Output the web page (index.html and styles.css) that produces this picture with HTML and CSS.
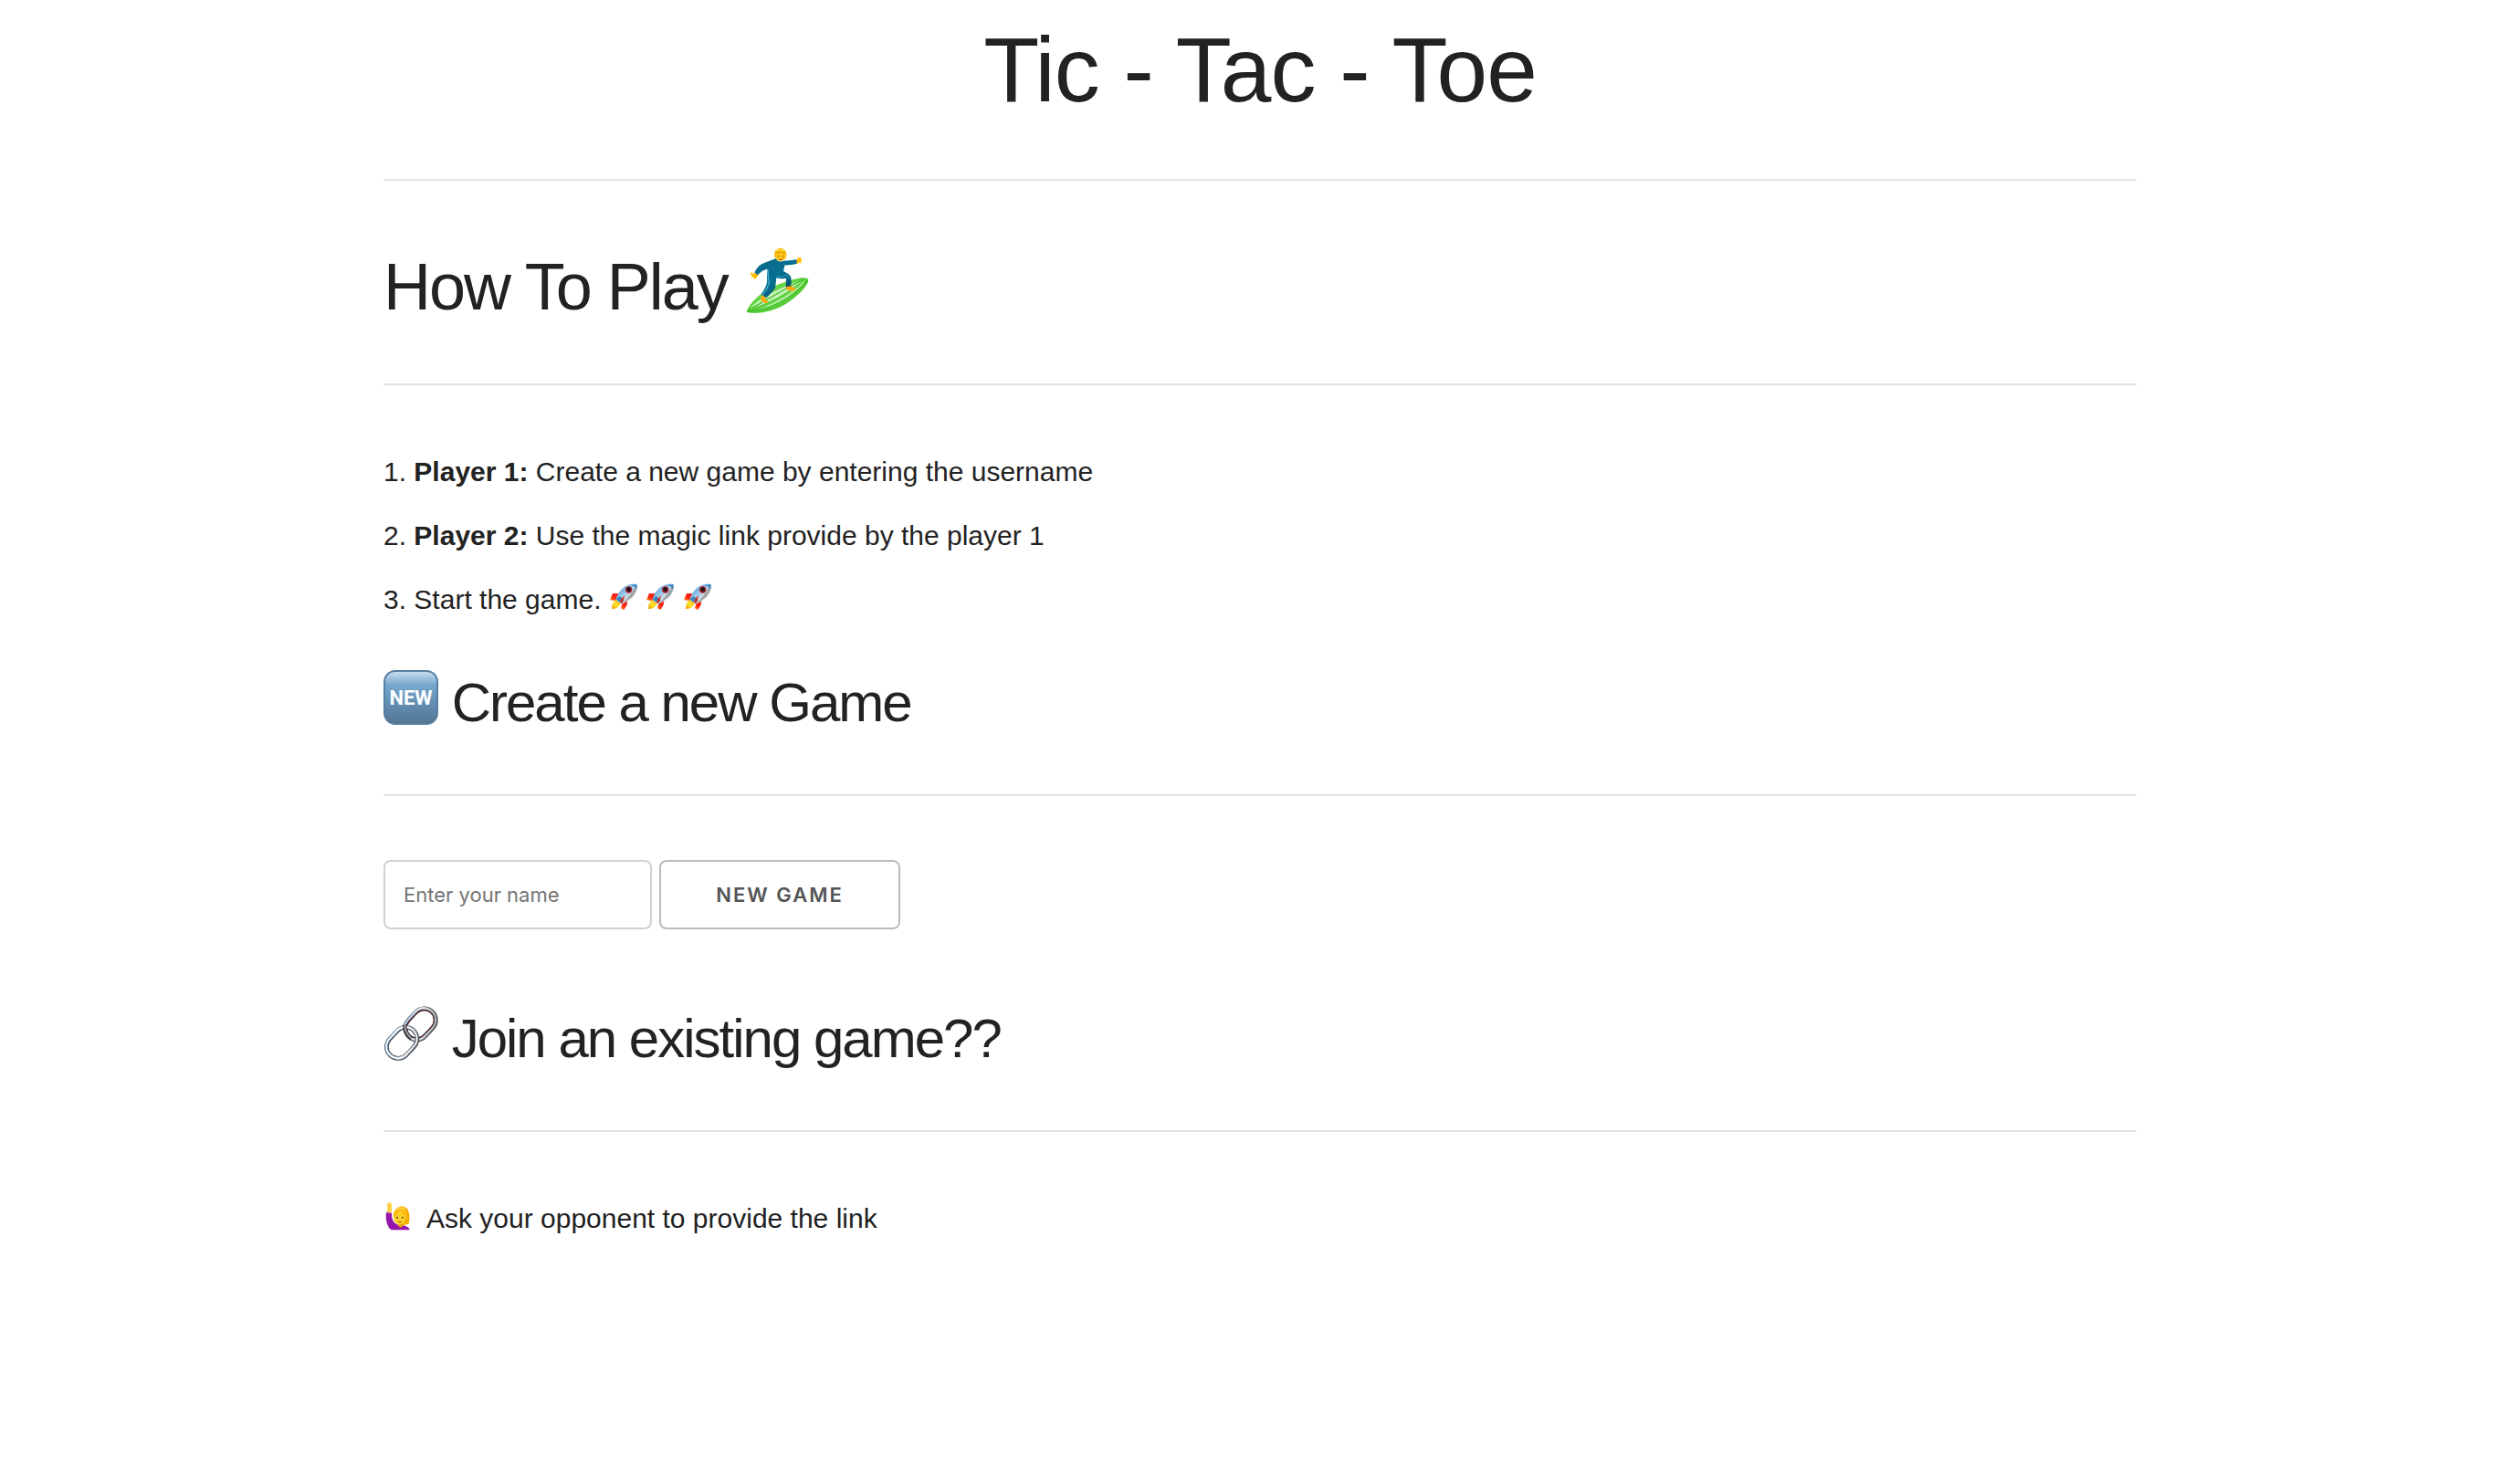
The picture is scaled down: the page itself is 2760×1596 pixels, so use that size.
FILE: index.html
```html
<!DOCTYPE html>
<html lang="en">
<head>
<meta charset="utf-8">
<meta name="viewport" content="width=device-width, initial-scale=1">
<title>Tic - Tac - Toe</title>
<link rel="stylesheet" href="styles.css">
</head>
<body>
<svg class="defs" aria-hidden="true">
  <defs>
    <linearGradient id="hull" x1="0" y1="0" x2="1" y2="1"><stop offset="0" stop-color="#2f7fc4"/><stop offset=".4" stop-color="#8fc4ea"/><stop offset=".65" stop-color="#dfe3e2"/><stop offset="1" stop-color="#5d6468"/></linearGradient>
    <linearGradient id="flame" x1="1" y1="0" x2="0" y2="1"><stop offset="0" stop-color="#ff8a00"/><stop offset=".5" stop-color="#ffe62e"/><stop offset="1" stop-color="#f39a00"/></linearGradient>
    <linearGradient id="fin" x1="1" y1="0" x2="0" y2="1"><stop offset="0" stop-color="#e01010"/><stop offset=".6" stop-color="#ff2a12"/><stop offset="1" stop-color="#ff9a10"/></linearGradient>
    <symbol id="rocket" viewBox="27 25 90 90">
      <path d="M57 59 36 58 27 80 46 82Z" fill="url(#fin)"/>
      <path d="M84 81 83 96 73 112 63 107 68 88Z" fill="url(#fin)"/>
      <path d="M47 78Q33 88 33 108Q50 113 62 92Z" fill="url(#flame)"/>
      <path d="M116 27Q121 49 102 70Q88 84 66 93L46 78Q55 50 75 36Q93 25 116 27Z" fill="url(#hull)"/>
      <path d="M58 67 74 79 66 92 47 78Z" fill="#3b81ba"/>
      <path d="M116 28Q119 50 99 70Q85 82 68 90Q92 68 103 48Z" fill="#747c80" opacity=".6"/>
      <path d="M93 31Q105 28 115 29Q117 38 114 44Q106 32 93 31Z" fill="#3d8bcb"/>
      <path d="M75 64Q64 74 60 88L66 91Q73 80 75 64Z" fill="#d92a18"/>
      <circle cx="89" cy="46" r="11" fill="#b51d2b"/><circle cx="89" cy="45" r="7" fill="#17161d"/>
    </symbol>
  </defs>
</svg>
<main class="container">
  <h1>Tic - Tac - Toe</h1>
  <hr>
  <h2>How To Play
    <svg class="emoji emoji-large" viewBox="50 36 216 216" role="img" aria-label="Surfer">
      <defs>
        <linearGradient id="suit" x1="0" y1="0" x2="1" y2="1"><stop offset="0" stop-color="#08698b"/><stop offset=".5" stop-color="#087092"/><stop offset="1" stop-color="#043c5a"/></linearGradient>
        <linearGradient id="board" x1="0" y1="0" x2="1" y2="1"><stop offset="0" stop-color="#7be55c"/><stop offset="1" stop-color="#43bd25"/></linearGradient>
      </defs>
      <path d="M57 248Q70 212 118 180Q170 150 225 138Q250 133 261 140Q263 156 233 186Q190 228 138 244Q90 257 57 248Z" fill="url(#board)"/>
      <path d="M66 238Q120 185 244 141Q215 170 160 200Q112 226 66 238Z" fill="#c9f3bd"/>
      <path d="M88 243Q155 217 202 184Q230 165 251 144Q237 175 191 207Q149 234 88 243Z" fill="#a8ec94"/>
      <path d="M64 242Q133 203 184 174Q219 155 246 140" fill="none" stroke="#40be25" stroke-width="4"/>
      <path d="M61 247Q140 240 195 201Q238 171 260 143" fill="none" stroke="#32b719" stroke-width="4"/>
      <path d="M73 118 70 125 77 128 71 137 80 133 82 140 90 137 99 123 89 116 82 123Z" fill="#ffc000"/>
      <path d="M219 78 228 72 226 66 232 70 235 67 236 72 241 75 237 79 237 89 230 86 223 91Z" fill="#ffbd08"/>
      <path d="M132 81Q110 88 99 97Q89 107 84 119L95 127Q105 112 127 107Q124 129 125 151Q122 168 105 191L123 202Q143 181 152 170L156 136Q171 141 188 137L187 169L202 171Q207 151 204 134Q200 124 179 114L184 94Q206 95 224 89L222 76Q200 80 181 80Q163 87 153 73Z" fill="url(#suit)"/>
      <path d="M128 109Q129 138 132 154Q126 174 109 194" fill="none" stroke="#4eafd0" stroke-width="4"/>
      <path d="M157 131Q176 135 190 126L199 139" fill="none" stroke="#218eb4" stroke-width="4"/>
      <path d="M108 192 104 207 111 217 126 220 130 214 120 208 122 201Z" fill="#ffad12"/>
      <path d="M188 166 188 174 208 180 216 178 219 171 202 163Z" fill="#ffa80c"/>
      <circle cx="170" cy="61" r="20" fill="#ffc51c"/>
      <path d="M150 64Q148 42 168 38Q186 38 188 60Q177 58 171 51Q163 61 154 56L154 72Z" fill="#eeb000"/>
      <path d="M154 48Q166 40 182 47" fill="none" stroke="#ffe045" stroke-width="5"/>
      <circle cx="163" cy="65" r="2" fill="#614315"/><circle cx="178" cy="65" r="2" fill="#614315"/><path d="M164 75Q170 80 177 74" fill="none" stroke="#a74b08" stroke-width="3"/>
    </svg>
  </h2>
  <hr>
  <ol class="steps">
    <li><strong>Player 1:</strong> Create a new game by entering the username</li>
    <li><strong>Player 2:</strong> Use the magic link provide by the player 1</li>
    <li>Start the game.
      <svg class="emoji emoji-small" role="img" aria-label="Rocket"><use href="#rocket"/></svg>
      <svg class="emoji emoji-small" role="img" aria-label="Rocket"><use href="#rocket"/></svg>
      <svg class="emoji emoji-small" role="img" aria-label="Rocket"><use href="#rocket"/></svg></li>
  </ol>
  <h3><svg class="emoji emoji-medium" viewBox="0 0 60 60" role="img" aria-label="New">
      <defs><linearGradient id="tile" x1="0" y1="0" x2="0" y2="1"><stop offset="0" stop-color="#c8dced"/><stop offset=".25" stop-color="#78a8cd"/><stop offset=".6" stop-color="#638fb4"/><stop offset="1" stop-color="#557793"/></linearGradient></defs>
      <rect width="60" height="60" rx="13" fill="#557fa3"/>
      <rect x="2" y="2" width="56" height="56" rx="11" fill="url(#tile)"/>
      <text class="tile-text" x="30" y="38" text-anchor="middle">NEW</text>
    </svg>
    Create a new Game</h3>
  <hr>
  <form class="new-game">
    <input type="text" placeholder="Enter your name" aria-label="Enter your name">
    <button type="button">New Game</button>
  </form>
  <h3><svg class="emoji emoji-medium" viewBox="30 42 180 180" role="img" aria-label="Link">
      <defs>
        <linearGradient id="steel" x1="0" y1="0" x2="1" y2="1"><stop offset="0" stop-color="#70aede"/><stop offset=".45" stop-color="#dce7f0"/><stop offset="1" stop-color="#76818c"/></linearGradient>
      </defs>
      <g fill="none">
        <g transform="rotate(-47 151 101)"><rect x="95" y="64" width="112" height="76" rx="38" stroke="#45393e" stroke-width="14"/><rect x="95" y="63" width="112" height="76" rx="38" stroke="url(#steel)" stroke-width="9"/><rect x="94" y="62" width="112" height="76" rx="38" stroke="#f3f7fb" stroke-width="2"/><rect x="100" y="68" width="102" height="66" rx="33" stroke="#54272b" stroke-width="4"/></g>
        <g transform="rotate(-47 89 163)"><rect x="34" y="126" width="112" height="76" rx="38" stroke="#3e4349" stroke-width="14"/><rect x="34" y="125" width="112" height="76" rx="38" stroke="url(#steel)" stroke-width="9"/><rect x="34" y="125" width="112" height="76" rx="38" stroke="#fff" stroke-width="4"/></g>
        <path d="M99 104Q101 133 122 150" stroke="#3c2b31" stroke-width="13"/><path d="M99 104Q102 132 122 149" stroke="#a9b6c1" stroke-width="5"/>
      </g>
    </svg>
    Join an existing game??</h3>
  <hr>
  <p><svg class="emoji emoji-small" viewBox="30 18 90 90" role="img" aria-label="Raised hand">
      <path d="M72 38Q88 23 105 39Q116 55 111 88Q98 96 84 92L60 69Q57 50 72 38Z" fill="#f5ae09"/>
      <path d="M36 51Q32 77 43 98Q48 109 60 109H113Q111 98 91 94Q78 98 67 88Q53 79 54 53Z" fill="#9315aa"/>
      <path d="M38 51 41 36 38 28 42 21 48 18 54 24 54 52Z" fill="#ffd044"/>
      <path d="M76 89 90 89 91 97 82 101 74 94Z" fill="#e79b05"/>
      <ellipse cx="80" cy="68" rx="20" ry="24" fill="#ffd22b"/>
      <path d="M59 67Q59 35 84 34Q104 37 104 65Q92 62 82 44Q76 57 59 67Z" fill="#ffbc14"/>
      <path d="M71 41Q84 31 98 42" fill="none" stroke="#ffe05a" stroke-width="4"/>
      <circle cx="72" cy="68" r="3" fill="#60390d"/><circle cx="90" cy="68" r="3" fill="#60390d"/><path d="M74 81Q81 88 88 81Z" fill="#96420b"/>
    </svg>&nbsp; Ask your opponent to provide the link</p>
</main>
</body>
</html>
```
FILE: styles.css
```css
*, *::before, *::after {
  box-sizing: border-box;
}

body {
  margin: 0;
  background: #fff;
  color: #222;
  font-family: "Liberation Sans", Arial, sans-serif;
  font-size: 30px;
  line-height: 50px;
}

.defs {
  position: absolute;
  width: 0;
  height: 0;
}

.container {
  width: 80%;
  max-width: 1920px;
  box-sizing: content-box;
  margin: 0 auto;
  padding: 16px 40px;
}

h1, h2, h3 {
  margin: 0;
  font-weight: 400;
}

h1 {
  font-size: 100px;
  line-height: 120px;
  letter-spacing: -1px;
  text-align: center;
}

h2 {
  font-size: 72px;
  line-height: 92px;
  letter-spacing: -2px;
}

h3 {
  font-size: 60px;
  line-height: 80px;
  letter-spacing: -2px;
}

hr {
  margin: 60px 0 70px;
  border: 0;
  border-top: 2px solid #e1e1e1;
}

.steps {
  margin: 0 0 48px;
  padding: 0;
  list-style-position: inside;
}

.steps li + li {
  margin-top: 20px;
}

.emoji {
  overflow: visible;
}

.emoji-large {
  width: 72px;
  height: 72px;
  vertical-align: -4px;
}

.emoji-medium {
  width: 60px;
  height: 60px;
  vertical-align: -4px;
}

.emoji-small {
  width: 32px;
  height: 30px;
  vertical-align: -2px;
}

.tile-text {
  fill: #fff;
  font-family: Roboto, sans-serif;
  font-size: 22px;
  font-weight: 700;
  letter-spacing: 0;
}

.new-game {
  margin-bottom: 80px;
}

input, button {
  height: 76px;
  border-radius: 8px;
  background: #fff;
  font-family: Inter, sans-serif;
  font-size: 22px;
}

input {
  width: 294px;
  padding: 12px 20px;
  border: 2px solid #d1d1d1;
  color: #222;
}

input::placeholder {
  color: #757575;
}

button {
  padding: 0 60px;
  border: 2px solid #bbb;
  color: #555;
  font-weight: 600;
  letter-spacing: 2px;
  text-transform: uppercase;
}

p {
  margin: 0;
}
```
